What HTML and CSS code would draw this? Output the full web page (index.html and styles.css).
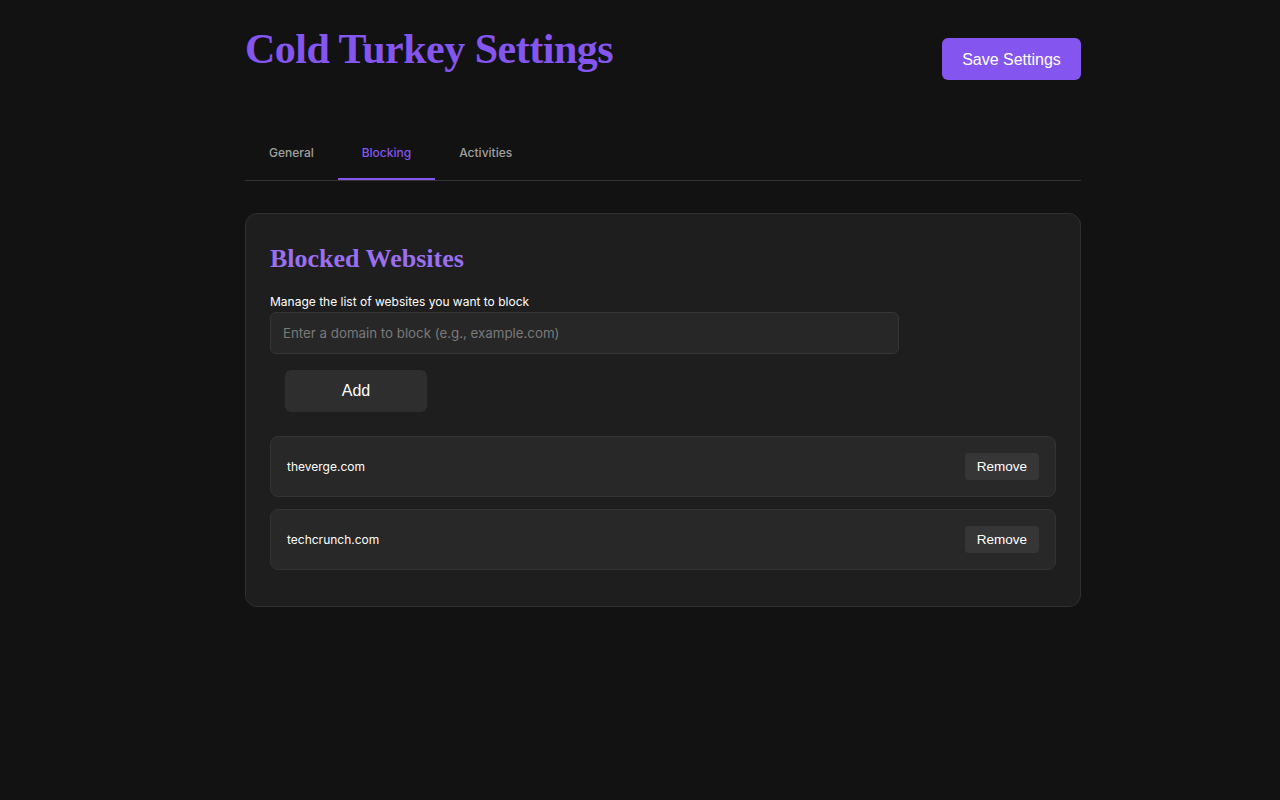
FILE: index.html
```html
<!DOCTYPE html>
<html lang="en">
<head>
<meta charset="utf-8">
<title>Cold Turkey Settings</title>
<link rel="stylesheet" href="styles.css">
</head>
<body>
<div class="container">
  <header class="header">
    <h1 class="title">Cold Turkey Settings</h1>
    <button class="save-btn">Save Settings</button>
  </header>
  <nav class="tabs">
    <div class="tab">General</div>
    <div class="tab active">Blocking</div>
    <div class="tab">Activities</div>
  </nav>
  <section class="card">
    <h2 class="card-title">Blocked Websites</h2>
    <label class="label">Manage the list of websites you want to block</label>
    <input class="domain-input" type="text" placeholder="Enter a domain to block (e.g., example.com)">
    <button class="add-btn">Add</button>
    <ul class="site-list">
      <li class="site-item"><span class="site-name">theverge.com</span><button class="remove-btn">Remove</button></li>
      <li class="site-item"><span class="site-name">techcrunch.com</span><button class="remove-btn">Remove</button></li>
    </ul>
  </section>
</div>
</body>
</html>
```
FILE: styles.css
```css
html, body {
  margin: 0;
  padding: 0;
  background: #121212;
  color: #ffffff;
  font-family: Inter, "Liberation Sans", sans-serif;
}
.container {
  width: 836px;
  margin: 0 auto;
  padding: 24px 0 0 46px;
}
.header {
  display: flex;
  justify-content: space-between;
  align-items: flex-start;
  height: 56px;
  margin-bottom: 50px;
}
.title {
  margin: 0;
  font-family: "Liberation Serif", "DejaVu Serif", serif;
  font-weight: 700;
  font-size: 42px;
  line-height: 50px;
  color: #8455ef;
  letter-spacing: -0.5px;
}
.save-btn {
  margin-top: 14px;
  width: 139px;
  height: 42px;
  border: none;
  border-radius: 6px;
  background: #8455ef;
  color: #ffffff;
  font-family: "Liberation Sans", Arial, sans-serif;
  font-size: 16px;
  padding-top: 2px;
}
.tabs {
  display: flex;
  border-bottom: 1px solid #333333;
}
.tab {
  padding: 15px 24px 17px;
  font-size: 12px;
  line-height: 16px;
  font-weight: 500;
  color: #a0a0a0;
  border-bottom: 2px solid transparent;
}
.tab.active {
  color: #8455ef;
  border-bottom-color: #8455ef;
}
.card {
  margin-top: 32px;
  background: #1e1e1e;
  border: 1px solid #2f2f2f;
  border-radius: 12px;
  padding: 24px;
  display: flex;
  flex-direction: column;
  align-items: flex-start;
}
.card-title {
  margin: 3px 0 0 0;
  font-family: "Liberation Serif", "DejaVu Serif", serif;
  font-weight: 700;
  font-size: 26px;
  line-height: 36px;
  color: #9a6ff0;
}
.label {
  margin-top: 17px;
  font-size: 12px;
  line-height: 16px;
  color: #ffffff;
}
.domain-input {
  margin-top: 2px;
  box-sizing: border-box;
  width: 629px;
  height: 42px;
  padding: 0 12px;
  background: #272727;
  border: 1px solid #353535;
  border-radius: 6px;
  color: #ffffff;
  font-family: Inter, "Liberation Sans", sans-serif;
  font-size: 13.3px;
  outline: none;
}
.domain-input::placeholder {
  color: #7a7a7a;
}
.add-btn {
  margin: 16px 0 0 15px;
  width: 142px;
  height: 42px;
  border: none;
  border-radius: 6px;
  background: #2e2e2e;
  color: #ffffff;
  font-family: "Liberation Sans", Arial, sans-serif;
  font-size: 16px;
}
.site-list {
  list-style: none;
  margin: 24px 0 0 0;
  padding: 0;
  align-self: stretch;
}
.site-item {
  display: flex;
  justify-content: space-between;
  align-items: center;
  padding: 16px;
  margin-bottom: 12px;
  background: #282828;
  border: 1px solid #333333;
  border-radius: 8px;
}
.site-name {
  font-size: 12px;
  color: #ffffff;
}
.remove-btn {
  width: 74px;
  height: 27px;
  border: none;
  border-radius: 4px;
  background: #363636;
  color: #ffffff;
  font-family: "Liberation Sans", Arial, sans-serif;
  font-size: 13.5px;
}
```
